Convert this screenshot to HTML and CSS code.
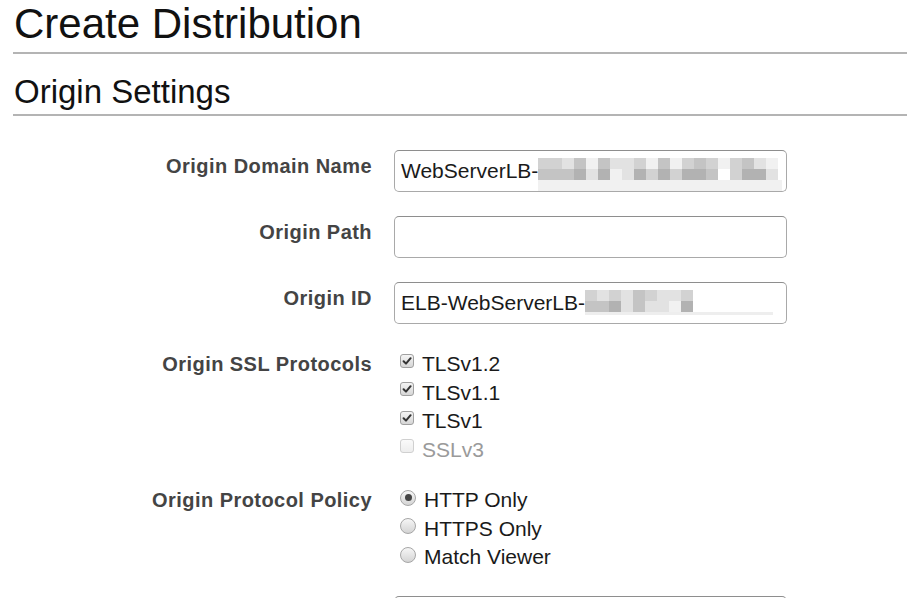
FILE: index.html
```html
<!DOCTYPE html>
<html>
<head>
<meta charset="utf-8">
<link rel="stylesheet" href="styles.css">
</head>
<body>
<div class="page">
  <h1 class="title">Create Distribution</h1>
  <h2 class="section">Origin Settings</h2>
  <div class="form">
    <div class="row">
      <div class="label">Origin Domain Name</div>
      <div class="field">
        <div class="input">
          <span class="val">WebServerLB-</span>
          <span class="blur blur-wide">
            <span class="brow">
              <i class="s2"></i><i class="s2"></i><i class="s1"></i><i class="s3"></i><i class="s0"></i><i class="s3"></i><i class="s1"></i><i class="s1"></i><i class="s2"></i><i class="s0"></i><i class="s3"></i><i class="s0"></i><i class="s2"></i><i class="s3"></i><i class="s2"></i><i class="s0"></i><i class="s2"></i><i class="s3"></i><i class="s1"></i><i class="s0"></i>
            </span>
            <span class="brow">
              <i class="s3"></i><i class="s3"></i><i class="s3"></i><i class="s4"></i><i class="s1"></i><i class="s4"></i><i class="s0"></i><i class="s1"></i><i class="s4"></i><i class="s2"></i><i class="s4"></i><i class="s2"></i><i class="s4"></i><i class="s4"></i><i class="s3"></i><i class="sw"></i><i class="s2"></i><i class="s4"></i><i class="s4"></i><i class="s1"></i>
            </span>
            <span class="bline"></span>
          </span>
        </div>
      </div>
    </div>
    <div class="row">
      <div class="label">Origin Path</div>
      <div class="field"><div class="input"></div></div>
    </div>
    <div class="row">
      <div class="label">Origin ID</div>
      <div class="field">
        <div class="input">
          <span class="val">ELB-WebServerLB-</span>
          <span class="blur blur-id">
            <span class="brow">
              <i class="s2"></i><i class="s1"></i><i class="s2"></i><i class="s1"></i><i class="s3"></i><i class="s2"></i><i class="s1"></i><i class="s1"></i><i class="s2"></i>
            </span>
            <span class="brow">
              <i class="s3"></i><i class="s3"></i><i class="s4"></i><i class="s1"></i><i class="s3"></i><i class="s1"></i><i class="s1"></i><i class="s0"></i><i class="s4"></i>
            </span>
            <span class="bline bline-id"></span>
          </span>
        </div>
      </div>
    </div>
    <div class="row row-checks">
      <div class="label">Origin SSL Protocols</div>
      <div class="field opts">
        <label class="opt"><span class="cb on"><svg viewBox="0 0 10 10" width="10" height="10"><path d="M1.6 5.2 L4 7.6 L8.6 2.2" fill="none" stroke="#333" stroke-width="2" stroke-linecap="round" stroke-linejoin="round"/></svg></span>TLSv1.2</label>
        <label class="opt"><span class="cb on"><svg viewBox="0 0 10 10" width="10" height="10"><path d="M1.6 5.2 L4 7.6 L8.6 2.2" fill="none" stroke="#333" stroke-width="2" stroke-linecap="round" stroke-linejoin="round"/></svg></span>TLSv1.1</label>
        <label class="opt"><span class="cb on"><svg viewBox="0 0 10 10" width="10" height="10"><path d="M1.6 5.2 L4 7.6 L8.6 2.2" fill="none" stroke="#333" stroke-width="2" stroke-linecap="round" stroke-linejoin="round"/></svg></span>TLSv1</label>
        <label class="opt disabled"><span class="cb off"></span>SSLv3</label>
      </div>
    </div>
    <div class="row">
      <div class="label">Origin Protocol Policy</div>
      <div class="field opts">
        <label class="opt"><span class="rb sel"><span class="dot"></span></span>HTTP Only</label>
        <label class="opt"><span class="rb"></span>HTTPS Only</label>
        <label class="opt"><span class="rb"></span>Match Viewer</label>
      </div>
    </div>
    <div class="row">
      <div class="label"></div>
      <div class="field"><div class="input"></div></div>
    </div>
  </div>
</div>
</body>
</html>
```
FILE: styles.css
```css
html, body {
  margin: 0;
  padding: 0;
  background: #fff;
}
body {
  font-family: "Liberation Sans", Arial, sans-serif;
  color: #111;
  overflow: hidden;
  height: 598px;
}
.page {
  padding: 0 0 0 13px;
}
.title {
  margin: 0;
  font-weight: normal;
  font-size: 42px;
  line-height: 48px;
  height: 52px;
  border-bottom: 2px solid #b4b4b4;
  padding-left: 1px;
  color: #111;
}
.section {
  margin: 0;
  font-weight: normal;
  font-size: 33px;
  line-height: 36px;
  padding-top: 20px;
  height: 40px;
  border-bottom: 2px solid #b4b4b4;
  padding-left: 1px;
  color: #111;
}
.form {
  padding-top: 34px;
  display: flex;
  flex-direction: column;
  gap: 24px;
}
.row {
  display: flex;
  gap: 22px;
  align-items: flex-start;
}
.row-checks {
  margin-bottom: -4px;
}
.label {
  width: 359px;
  text-align: right;
  font-weight: bold;
  font-size: 20px;
  letter-spacing: 0.45px;
  color: #444;
  line-height: 20px;
  padding-top: 6px;
}
.field {
  flex: 0 0 auto;
}
.input {
  width: 385px;
  height: 40px;
  border: 1px solid #a9a9a9;
  border-top-color: #8e8e8e;
  border-radius: 5px;
  box-sizing: content-box;
  display: flex;
  align-items: center;
  padding-left: 6px;
  overflow: visible;
  font-size: 21px;
  color: #1a1a1a;
}
.val {
  white-space: nowrap;
}
.blur {
  display: flex;
  flex-direction: column;
  align-self: flex-start;
  margin-top: 7px;
}
.brow {
  display: flex;
  height: 11px;
}
.brow i {
  display: block;
  width: 12px;
  height: 11px;
}
.s0 { background: #f1f1f1; }
.s1 { background: #e2e2e2; }
.s2 { background: #d2d2d2; }
.s3 { background: #c4c4c4; }
.s4 { background: #b2b2b2; }
.sw { background: #ffffff; }
.bline {
  display: block;
  height: 11px;
  width: 244px;
  background: #f1f1f1;
}
.blur-wide {
  margin-right: -6px;
}
.blur-id .bline-id {
  height: 3px;
  width: 188px;
  background: #eeeeee;
}
.opts {
  display: flex;
  flex-direction: column;
  padding-left: 6px;
  padding-top: 2px;
}
.opt {
  display: flex;
  align-items: center;
  font-size: 21px;
  line-height: 28.5px;
  height: 28.5px;
  color: #1a1a1a;
}
.opt.disabled {
  color: #9a9a9a;
}
.cb {
  width: 14px;
  height: 14px;
  border: 1px solid #a0a0a0;
  border-radius: 3px;
  background: linear-gradient(#f4f4f4, #d6d6d6);
  margin-right: 8px;
  display: flex;
  align-items: center;
  justify-content: center;
  box-sizing: border-box;
  margin-top: -7px;
}
.cb svg {
  display: block;
}
.cb.off {
  border-color: #d0d0d0;
  background: linear-gradient(#fafafa, #ededed);
}
.rb {
  width: 16px;
  height: 16px;
  border: 1px solid #a6a6a6;
  border-radius: 50%;
  background: linear-gradient(#f6f6f6, #d4d4d4);
  margin-right: 8px;
  box-sizing: border-box;
  display: flex;
  align-items: center;
  justify-content: center;
  margin-top: -5px;
}
.rb .dot {
  width: 7px;
  height: 7px;
  border-radius: 50%;
  background: #444;
}
```
